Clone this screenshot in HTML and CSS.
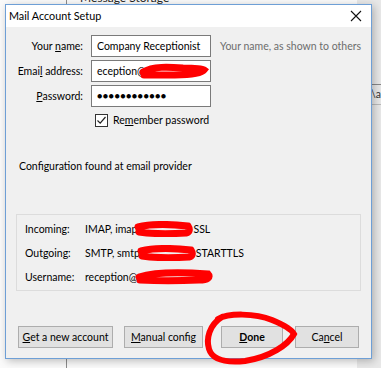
FILE: index.html
```html
<!DOCTYPE html>
<html lang="en">
<head>
    <meta charset="UTF-8">
    <title>Mail Account Setup</title>
    <link rel="stylesheet" href="styles.css">
</head>
<body>
    <!-- Thunderbird window behind the dialog -->
    <div class="app">
        <div class="app-side"></div>
        <div class="app-main">
            <div class="app-heading">Message Storage</div>
            <div class="app-field">\a</div>
        </div>
    </div>

    <div class="dialog">
        <div class="titlebar">
            <span class="title">Mail Account Setup</span>
            <svg class="close" width="12" height="12" viewBox="0 0 12 12">
                <path d="M1 1 L11 11 M11 1 L1 11" stroke="#111" stroke-width="1.1" fill="none"/>
            </svg>
        </div>

        <div class="dialog-body">
            <div class="form">
                <label class="form-label">Your <u>n</u>ame:</label>
                <div class="textbox">Company Receptionist</div>
                <span class="hint">Your name, as shown to others</span>

                <label class="form-label">Emai<u>l</u> address:</label>
                <div class="textbox">eception@
                    <svg class="scribble" width="70" height="16" viewBox="0 0 70 16">
                        <path d="M4 9 C14 3 30 4 44 5 C54 5 62 5 65 7 C62 11 48 12 36 12 C24 12 12 12 5 12" stroke="#f00" stroke-width="7" fill="none" stroke-linecap="round"/>
                    </svg>
                </div>
                <span></span>

                <label class="form-label"><u>P</u>assword:</label>
                <div class="textbox dots">&#9679;&#9679;&#9679;&#9679;&#9679;&#9679;&#9679;&#9679;&#9679;&#9679;&#9679;&#9679;</div>
                <span></span>

                <span></span>
                <label class="check-row">
                    <span class="checkbox">
                        <svg width="11" height="11" viewBox="0 0 11 11"><path d="M1.5 5.5 L4.2 8.2 L9.5 2" stroke="#222" stroke-width="1.2" fill="none"/></svg>
                    </span>
                    <span>Re<u>m</u>ember password</span>
                </label>
                <span></span>
            </div>

            <p class="status">Configuration found at email provider</p>

            <div class="group">
                <div class="group-row">
                    <span class="group-label">Incoming:</span>
                    <span class="group-value">IMAP, imap<span class="gap"><svg class="scribble" width="60" height="16" viewBox="0 0 60 16"><path d="M4 6 C16 3 36 3 54 5 C56 8 56 11 52 12 C36 13 18 13 5 11" stroke="#f00" stroke-width="7" fill="none" stroke-linecap="round"/></svg></span>SSL</span>
                </div>
                <div class="group-row">
                    <span class="group-label">Outgoing:</span>
                    <span class="group-value">SMTP, smtp<span class="gap"><svg class="scribble" width="60" height="16" viewBox="0 0 60 16"><path d="M4 6 C16 3 36 3 54 5 C56 8 56 11 52 12 C36 13 18 13 5 11" stroke="#f00" stroke-width="7" fill="none" stroke-linecap="round"/></svg></span>STARTTLS</span>
                </div>
                <div class="group-row">
                    <span class="group-label">Username:</span>
                    <span class="group-value">reception@<span class="gap wide"><svg class="scribble" width="80" height="16" viewBox="0 0 80 16"><path d="M4 8 C20 3 46 3 73 5 C76 8 73 11 64 11 C44 12 22 12 5 11" stroke="#f00" stroke-width="7" fill="none" stroke-linecap="round"/></svg></span></span>
                </div>
            </div>

            <div class="buttons">
                <button class="btn btn-new"><u>G</u>et a new account</button>
                <button class="btn btn-manual"><u>M</u>anual config</button>
                <button class="btn btn-default"><u>D</u>one</button>
                <button class="btn btn-cancel">Ca<u>n</u>cel</button>
            </div>
        </div>

        <!-- hand drawn circle around Done -->
        <svg class="circle" width="104" height="60" viewBox="0 0 104 60">
            <path d="M18 10 C28 4 55 4 72 11 C84 16 92 21 94 25 C88 36 70 48 45 52 C25 54 12 50 9 40 C6 30 9 16 22 8" stroke="#f00" stroke-width="6" fill="none" stroke-linecap="round"/>
        </svg>
    </div>
</body>
</html>
```

FILE: styles.css
```css
body {
    margin: 0;
    font-family: Lato, "Noto Sans", sans-serif;
    font-size: 10.5px;
    line-height: 14px;
    color: #000;
    background: #fafafa;
    overflow: hidden;
}
u {
    text-decoration: underline;
    text-underline-offset: 1px;
}

/* background window */
.app {
    display: flex;
    height: 368px;
}
.app-side {
    width: 68px;
    border-right: 1px solid #8c8c8c;
}
.app-main {
    flex: 1;
    padding-left: 13px;
    background: linear-gradient(to right, #fafafa 290px, #e8e8e8 290px);
}
.app-heading {
    margin-top: -9px;
    font-size: 12px;
    color: #222;
}
.app-field {
    margin: 79px 0 0 291px;
    height: 19px;
    line-height: 19px;
    border-top: 1px solid #888;
    border-bottom: 1px solid #bbb;
    color: #333;
}

/* dialog window */
.dialog {
    position: absolute;
    left: 5px;
    top: 4px;
    width: 365px;
    height: 353px;
    background: #f0f0f0;
    border: 1px solid #6e9fd6;
    box-shadow: 2px 2px 8px rgba(0, 0, 0, 0.25);
}
.titlebar {
    display: flex;
    align-items: center;
    justify-content: space-between;
    height: 22px;
    padding: 0 9px 0 3px;
    background: #fff;
}
.title {
    font-size: 10.8px;
}
.dialog-body {
    padding: 8px 9px 0 9px;
}

.form {
    display: grid;
    grid-template-columns: 68px 120px auto;
    column-gap: 8px;
    row-gap: 3px;
    align-items: center;
    white-space: nowrap;
}
.form-label {
    text-align: right;
}
.textbox {
    position: relative;
    height: 20px;
    line-height: 20px;
    padding: 0 5px;
    background: #fff;
    border: 1px solid #7a7a7a;
}
.dots {
    font-size: 9px;
    letter-spacing: 0.4px;
}
.hint {
    color: #6d6d6d;
    margin-left: 1px;
}
.scribble {
    position: absolute;
}
.textbox .scribble {
    left: 47px;
    top: 2px;
}
.check-row {
    display: flex;
    align-items: center;
    gap: 5px;
    margin: 3px 0 0 4px;
}
.checkbox {
    display: flex;
    align-items: center;
    justify-content: center;
    width: 11px;
    height: 11px;
    border: 1px solid #333;
    background: #fff;
}

.status {
    margin: 32px 0 0 4px;
}

.group {
    margin: 41px 1px 0 1px;
    padding: 2px 8px 1px 8px;
    border: 1px solid #dcdcdc;
}
.group-row {
    display: flex;
    height: 24px;
    align-items: center;
    white-space: nowrap;
}
.group-label {
    flex-shrink: 0;
    width: 60px;
}
.group-value {
    display: flex;
    align-items: center;
}
.gap {
    position: relative;
    display: inline-block;
    width: 56px;
    height: 16px;
}
.gap.wide {
    width: 76px;
}
.gap .scribble {
    left: -3px;
    top: 0;
}

.buttons {
    display: flex;
    margin: 35px 3px 0 3px;
}
.btn {
    height: 22px;
    padding: 0;
    font-family: inherit;
    font-size: 10.5px;
    white-space: nowrap;
    color: #000;
    background: #e1e1e1;
    border: 1px solid #adadad;
}
.btn-new {
    width: 95px;
}
.btn-manual {
    width: 79px;
    margin-left: 11px;
}
.btn-default {
    width: 62px;
    margin-left: 18px;
    font-weight: bold;
}
.btn-cancel {
    width: 64px;
    margin-left: 12px;
}

.circle {
    position: absolute;
    left: 194px;
    top: 304px;
}
```
